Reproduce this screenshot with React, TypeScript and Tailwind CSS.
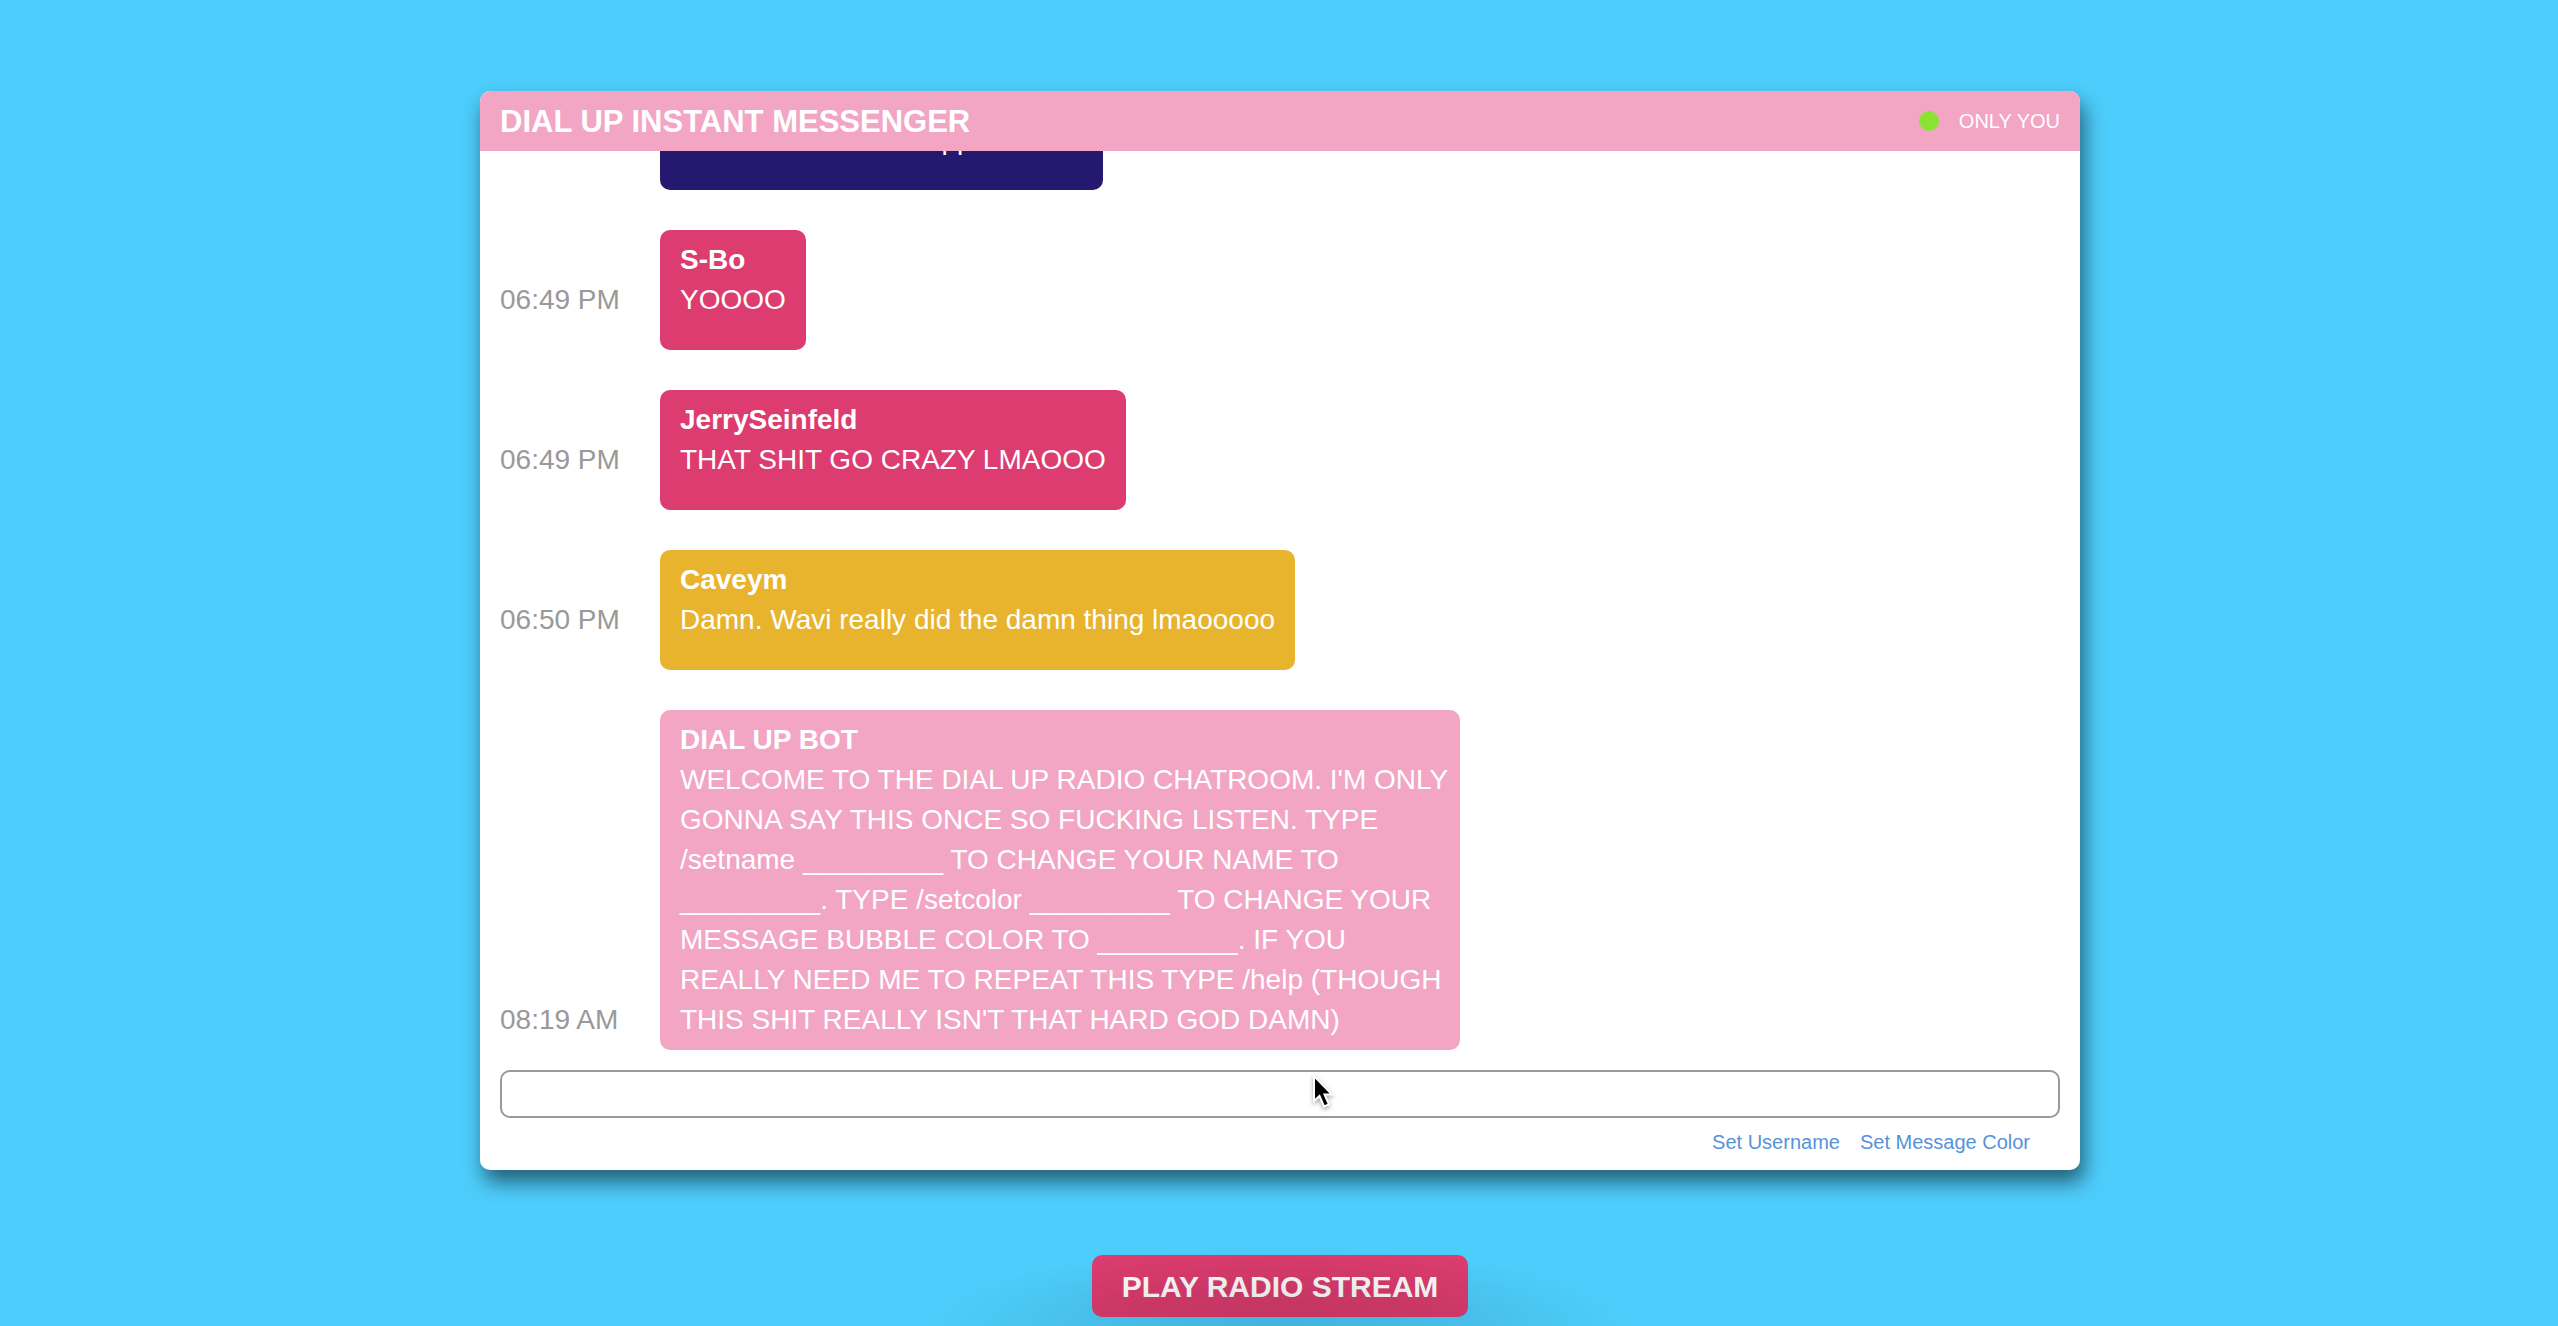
import React from "react";

type Message = {
  time: string;
  name: string;
  color: string;
  lines: string[];
};

const messages: Message[] = [
  { time: "06:48 PM", name: "Caveym", color: "bg-[#25186f]", lines: ["No idea what else happened bro"] },
  { time: "06:49 PM", name: "S-Bo", color: "bg-[#dc3c6f]", lines: ["YOOOO"] },
  { time: "06:49 PM", name: "JerrySeinfeld", color: "bg-[#dc3c6f]", lines: ["THAT SHIT GO CRAZY LMAOOO"] },
  { time: "06:50 PM", name: "Caveym", color: "bg-[#e8b42d]", lines: ["Damn. Wavi really did the damn thing lmaooooo"] },
  {
    time: "08:19 AM",
    name: "DIAL UP BOT",
    color: "bg-[#f2a6c4]",
    lines: [
      "WELCOME TO THE DIAL UP RADIO CHATROOM. I'M ONLY",
      "GONNA SAY THIS ONCE SO FUCKING LISTEN. TYPE",
      "/setname _________ TO CHANGE YOUR NAME TO",
      "_________. TYPE /setcolor _________ TO CHANGE YOUR",
      "MESSAGE BUBBLE COLOR TO _________. IF YOU",
      "REALLY NEED ME TO REPEAT THIS TYPE /help (THOUGH",
      "THIS SHIT REALLY ISN'T THAT HARD GOD DAMN)",
    ],
  },
];

function MessageRow({ message }: { message: Message }) {
  return (
    <li className="flex shrink-0 [align-items:last_baseline]">
      <time className="w-[180px] shrink-0 pl-5 text-[28px] leading-10 text-[#999999]">{message.time}</time>
      <div className={`min-h-[120px] max-w-1/2 rounded-[10px] px-5 py-2.5 text-[28px] leading-10 text-white ${message.color}`}>
        <h2 className="font-bold">{message.name}</h2>
        <p className="whitespace-pre">{message.lines.join("\n")}</p>
      </div>
    </li>
  );
}

function Cursor() {
  return (
    <svg aria-hidden="true" viewBox="0 0 24 36" className="pointer-events-none absolute top-6 left-1/2 ml-8 h-9 w-6 drop-shadow-[0_2px_2px_rgba(0,0,0,0.35)]">
      <path d="M2 2v25l5.500-5 4.500 10.500 5-2-4.500-10H20z" fill="#000" stroke="#fff" strokeWidth="2" />
    </svg>
  );
}

export default function App() {
  return (
    <main className="relative flex h-screen flex-col items-center overflow-hidden bg-[#4dcdfb] pt-[91px] pr-12 pb-[9px] pl-[50px] font-['Liberation_Sans',Arial,sans-serif]">
      <section className="flex min-h-0 w-full max-w-[1600px] flex-1 flex-col rounded-[10px] bg-white shadow-[4px_12px_20px_rgba(0,0,0,0.53)]">
        <header className="flex h-[60px] shrink-0 items-center justify-between rounded-t-[10px] bg-[#f2a6c4] px-5 text-white">
          <h1 className="pt-0.5 text-[31px] leading-10 font-bold">DIAL UP INSTANT MESSENGER</h1>
          <p className="flex items-center gap-5 text-xl">
            <span className="size-5 rounded-full bg-[#8ae234]" />
            ONLY YOU
          </p>
        </header>
        <ul className="flex min-h-0 flex-1 flex-col justify-end gap-10 overflow-hidden">
          {messages.map((message, index) => (
            <MessageRow key={index} message={message} />
          ))}
        </ul>
        <form className="relative px-5 pt-5" onSubmit={(event) => event.preventDefault()}>
          <input aria-label="Message" className="block h-12 w-full rounded-[10px] border-2 border-[#999999] bg-white px-4 text-[28px] outline-none" />
          <Cursor />
        </form>
        <nav className="flex h-[52px] items-center justify-end gap-5 pr-[50px] pb-1 text-xl text-[#5792db]">
          <a href="#username">Set Username</a>
          <a href="#color">Set Message Color</a>
        </nav>
      </section>
      <button type="button" className="mt-[85px] h-[62px] shrink-0 rounded-[10px] bg-[#dc3c6f] px-[30px] text-[30px] font-bold text-white">
        PLAY RADIO STREAM
      </button>
      <div className="pointer-events-none absolute bottom-0 left-1/2 h-20 w-[700px] -translate-x-1/2 bg-[radial-gradient(ellipse_50%_100%_at_50%_100%,rgba(0,0,0,0.13),rgba(0,0,0,0.08)_50%,transparent)]" />
    </main>
  );
}
